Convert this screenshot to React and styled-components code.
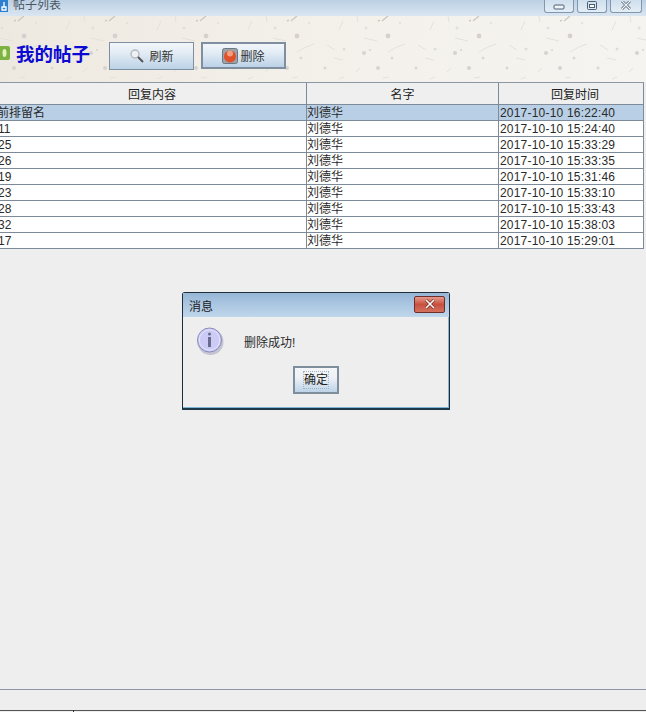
import React from "react";
import styled, { createGlobalStyle } from "styled-components";

const Global = createGlobalStyle`
  html, body { margin: 0; padding: 0; background: #eeeeee; overflow: hidden; }
  #root { width: 646px; height: 712px; }
`;

const FONT = `"Liberation Sans", "Noto Sans CJK SC", sans-serif`;

const Frame = styled.div`
  position: relative;
  width: 646px;
  height: 712px;
  overflow: hidden;
  display: flex;
  flex-direction: column;
  background: #eeeeee;
  font-family: ${FONT};
  font-size: 12px;
  color: #222;
`;

const TitleBar = styled.div`
  height: 16px;
  flex: none;
  display: flex;
  align-items: flex-start;
  justify-content: space-between;
  background: linear-gradient(#bcd0e4, #dae6f1);
`;

const TitleGroup = styled.div`
  display: flex;
  align-items: flex-start;
  height: 12px;
  gap: 5px;
  color: #4a5560;
  font-size: 12px;
`;

const AppIcon = styled.svg`
  width: 8px;
  height: 12px;
  flex: none;
`;

const TitleText = styled.span`
  line-height: 11px;
`;

const Controls = styled.div`
  display: flex;
  gap: 3px;
  padding-right: 4px;
`;

const Control = styled.div`
  width: ${(p) => p.$width}px;
  height: 13px;
  box-sizing: border-box;
  border: 1px solid #8197ad;
  border-top: none;
  border-radius: 0 0 3px 3px;
  background: linear-gradient(#cfdfee, #e4edf5);
  display: flex;
  align-items: center;
  justify-content: center;
`;

const Toolbar = styled.div`
  position: relative;
  flex: none;
  height: 66px;
  background: linear-gradient(90deg, #eee9e0, #f3f0ea 45%, #f6f4f0);
  overflow: hidden;
`;

const Texture = styled.svg`
  position: absolute;
  inset: 0;
  width: 100%;
  height: 100%;
`;

const ToolbarRow = styled.div`
  position: relative;
  display: flex;
  align-items: center;
  height: 66px;
  padding-top: 13px;
  box-sizing: border-box;
`;

const Badge = styled.svg`
  width: 10px;
  height: 16px;
  flex: none;
  margin-right: 6px;
  margin-bottom: 5px;
`;

const Heading = styled.div`
  width: 93px;
  margin-bottom: 5px;
  color: #0a0ad2;
  font-family: "Noto Sans CJK SC", sans-serif;
  font-size: 18.5px;
  font-weight: 700;
  line-height: 20px;
`;

const ToolButton = styled.div`
  width: 85px;
  height: ${(p) => (p.$active ? 27 : 28)}px;
  margin-right: ${(p) => (p.$active ? 0 : 7)}px;
  box-sizing: border-box;
  display: flex;
  align-items: center;
  justify-content: center;
  gap: ${(p) => (p.$active ? 2 : 4)}px;
  border: ${(p) => (p.$active ? "2px solid #7f8fa0" : "1px solid #7e8fa1")};
  background: linear-gradient(#f2f6fa, #e4edf5 35%, #bcd2e7);
  color: #333;
  font-size: 12px;
`;

const TableWrap = styled.div`
  flex: none;
  width: 644px;
  border-top: 1px solid #8c98a5;
`;

const HeaderRow = styled.div`
  display: grid;
  grid-template-columns: 307px 192px 145px;
  height: 22px;
  box-sizing: border-box;
  border-bottom: 1px solid #7d8a99;
  background: #efefef;
`;

const HeaderCell = styled.div`
  box-sizing: border-box;
  border-right: 1px solid #7d8a99;
  text-align: center;
  padding-left: ${(p) => p.$pad || 0}px;
  padding-right: ${(p) => p.$padRight || 0}px;
  line-height: 24px;
  font-size: 12px;
  color: #222;
`;

const Row = styled.div`
  display: grid;
  grid-template-columns: 307px 192px 145px;
  height: 16px;
  box-sizing: border-box;
  border-bottom: 1px solid #7d8a99;
  background: ${(p) => (p.$selected ? "#b8cfe5" : "#ffffff")};
`;

const Cell = styled.div`
  box-sizing: border-box;
  border-right: 1px solid #7d8a99;
  line-height: 16px;
  font-size: 12px;
  color: #2a2a2a;
  white-space: nowrap;
  padding-left: ${(p) => p.$pad || 0}px;
  text-indent: ${(p) => p.$indent || 0}px;
  letter-spacing: ${(p) => p.$spacing || 0}px;
`;

const Filler = styled.div`
  flex: 1;
`;

const StatusBar = styled.div`
  flex: none;
  height: 23px;
  box-sizing: border-box;
  border-top: 1px solid #8b95a3;
  position: relative;
  background: #eeeeee;
`;

const BottomEdge = styled.div`
  position: absolute;
  left: 0;
  right: 0;
  bottom: 1px;
  height: 1px;
  background: #555;
`;

const Tick = styled.div`
  position: absolute;
  left: 73px;
  bottom: 0;
  width: 1px;
  height: 2px;
  background: #333;
`;

const Dialog = styled.div`
  position: absolute;
  left: 182px;
  top: 292px;
  width: 268px;
  height: 118px;
  box-sizing: border-box;
  border: 1px solid #1f2d3a;
  border-bottom: 2px solid #1c3a4a;
  border-radius: 3px 3px 0 0;
  background: #eeeeee;
  display: flex;
  flex-direction: column;
  box-shadow: inset -1px -1px 0 #7fb6d6;
`;

const DialogTitle = styled.div`
  height: 24px;
  flex: none;
  display: flex;
  align-items: center;
  justify-content: space-between;
  padding: 0 4px 0 6px;
  background: linear-gradient(#97b7d6, #c0d7ec);
  font-size: 12px;
  color: #1a1a1a;
`;

const CloseBtn = styled.div`
  width: 31px;
  height: 17px;
  box-sizing: border-box;
  border: 1px solid #6e2f2a;
  border-radius: 2px;
  background: linear-gradient(#e59b8c, #c9503e 50%, #d3725f);
  display: flex;
  align-items: center;
  justify-content: center;
  margin-top: -2px;
`;

const DialogBody = styled.div`
  flex: 1;
  display: flex;
  flex-direction: column;
`;

const Message = styled.div`
  display: flex;
  align-items: center;
  padding: 9px 0 0 13px;
  gap: 20px;
  font-size: 12px;
  color: #2a2a2a;
`;

const InfoIcon = styled.svg`
  width: 28px;
  height: 30px;
  flex: none;
`;

const OkRow = styled.div`
  display: flex;
  justify-content: center;
  margin-top: 10px;
`;

const OkButton = styled.div`
  width: 46px;
  height: 28px;
  box-sizing: border-box;
  border: 2px solid #7f8e9c;
  background: linear-gradient(#f4f6f8, #eef2f6 40%, #bdd3e8);
  display: flex;
  align-items: center;
  justify-content: center;
`;

const OkLabel = styled.span`
  border: 1px dotted #9fb3c7;
  padding: 0;
  line-height: 16px;
  font-size: 12px;
  color: #222;
`;

const rows = [
  ["前排留名", "2017-10-10 16:22:40", true],
  ["11", "2017-10-10 15:24:40"],
  ["25", "2017-10-10 15:33:29"],
  ["26", "2017-10-10 15:33:35"],
  ["19", "2017-10-10 15:31:46"],
  ["23", "2017-10-10 15:33:10"],
  ["28", "2017-10-10 15:33:43"],
  ["32", "2017-10-10 15:38:03"],
  ["17", "2017-10-10 15:29:01"],
];

const Tile = () => (
  <pattern id="paper" width="91" height="66" patternUnits="userSpaceOnUse" patternTransform="translate(16 0)">
    <circle cx="8" cy="20" r="2.4" fill="#d8d0ce" />
    <circle cx="12" cy="42" r="1.5" fill="#dcd9d5" />
    <circle cx="36" cy="52" r="1.5" fill="#dad7d3" />
    <circle cx="55" cy="33" r="1.5" fill="#e0ddd9" />
    <circle cx="75" cy="37" r="2" fill="#d6d3cf" />
    <circle cx="81" cy="34" r="1" fill="#d8d5d1" />
    <circle cx="89" cy="52" r="2" fill="#d6d3cf" />
    <circle cx="77" cy="12" r="1.5" fill="#e2dfdb" />
    <circle cx="20" cy="7" r="1.1" fill="#e2dfdb" />
    <path d="M8 36l9-5 8-3M38 29l8 5M45 42l9 2M50 14l4-9M75 22l13 3M68 0l1 6M50 63l5-2M67 56l4-4M3 62l6-1" stroke="#e4e1da" strokeWidth="1" fill="none" />
    <path d="M89 5l7-3M2 5l6-5" stroke="#cdc9c0" strokeWidth="1.4" fill="none" />
  </pattern>
);

export default function App() {
  return (
    <Frame>
      <Global />
      <TitleBar>
        <TitleGroup>
          <AppIcon viewBox="0 0 8 12">
            <rect x="0" y="0" width="8" height="12" fill="#2f7fd0" />
            <path d="M2 7h4v3H2z M4 2v5" stroke="#fff" strokeWidth="1.3" fill="none" />
          </AppIcon>
          <TitleText>帖子列表</TitleText>
        </TitleGroup>
        <Controls>
          <Control $width={30}>
            <svg width="14" height="7" viewBox="0 0 14 7"><rect x="2" y="2" width="10" height="4" rx="1" fill="#eef3f8" stroke="#4d5f72" /></svg>
          </Control>
          <Control $width={30}>
            <svg width="12" height="10" viewBox="0 0 12 10"><rect x="1.5" y="0.5" width="9" height="8" rx="1" fill="none" stroke="#4d5f72" /><rect x="3.5" y="3.5" width="5" height="3" fill="#fff" stroke="#4d5f72" /></svg>
          </Control>
          <Control $width={32}>
            <svg width="14" height="10" viewBox="0 0 14 10"><path d="M3 0l8 8M11 0l-8 8" stroke="#4d5f72" strokeWidth="2.6" /><path d="M3 0l8 8M11 0l-8 8" stroke="#f4f7fa" strokeWidth="1.2" /></svg>
          </Control>
        </Controls>
      </TitleBar>

      <Toolbar>
        <Texture>
          <defs><Tile /></defs>
          <rect width="646" height="66" fill="url(#paper)" />
        </Texture>
        <ToolbarRow>
          <Badge viewBox="0 0 10 16">
            <rect x="-5" y="1" width="15" height="14" rx="2" fill="#7cb342" />
            <ellipse cx="4.5" cy="8" rx="2" ry="4" fill="#e8f0c0" />
          </Badge>
          <Heading>我的帖子</Heading>
          <ToolButton>
            <svg width="16" height="16" viewBox="0 0 16 16">
              <circle cx="6" cy="6" r="4" fill="#eef1f3" stroke="#b5b9bd" strokeWidth="1.4" />
              <path d="M9 9l5 5" stroke="#555" strokeWidth="2" />
            </svg>
            <span>刷新</span>
          </ToolButton>
          <ToolButton $active>
            <svg width="16" height="16" viewBox="0 0 16 16">
              <rect x="0.5" y="0.5" width="15" height="15" rx="2" fill="#9aa3ab" stroke="#6d7780" />
              <circle cx="8" cy="8.5" r="6" fill="#e0502a" />
              <circle cx="8" cy="5.5" r="3" fill="#f0a080" />
            </svg>
            <span>删除</span>
          </ToolButton>
        </ToolbarRow>
      </Toolbar>

      <TableWrap>
        <HeaderRow>
          <HeaderCell $padRight={2}>回复内容</HeaderCell>
          <HeaderCell>名字</HeaderCell>
          <HeaderCell $pad={8}>回复时间</HeaderCell>
        </HeaderRow>
        {rows.map(([title, time, selected], i) => (
          <Row key={i} $selected={selected}>
            <Cell $indent={selected ? -3 : -2}>{title}</Cell>
            <Cell>刘德华</Cell>
            <Cell $pad={1} $spacing={0.2}>{time}</Cell>
          </Row>
        ))}
      </TableWrap>

      <Filler />

      <StatusBar>
        <BottomEdge />
        <Tick />
      </StatusBar>

      <Dialog>
        <DialogTitle>
          <span>消息</span>
          <CloseBtn>
            <svg width="14" height="10" viewBox="0 0 14 10">
              <path d="M3 1l8 8M11 1l-8 8" stroke="#7a2a22" strokeWidth="3" />
              <path d="M3 1l8 8M11 1l-8 8" stroke="#fff" strokeWidth="1.6" />
            </svg>
          </CloseBtn>
        </DialogTitle>
        <DialogBody>
          <Message>
            <InfoIcon viewBox="0 0 28 30">
              <ellipse cx="14.5" cy="16" rx="13" ry="13" fill="#9a9ab5" opacity="0.5" />
              <circle cx="13.5" cy="14" r="12" fill="#cbcbf6" stroke="#8a8abb" />
              <circle cx="13.5" cy="14" r="10.2" fill="none" stroke="#e4e4fb" strokeWidth="1" />
              <circle cx="13.5" cy="8" r="1.5" fill="#6a6a8c" />
              <rect x="12" y="11" width="3" height="10" fill="#6a6a8c" />
            </InfoIcon>
            <span>删除成功!</span>
          </Message>
          <OkRow>
            <OkButton><OkLabel>确定</OkLabel></OkButton>
          </OkRow>
        </DialogBody>
      </Dialog>
    </Frame>
  );
}
